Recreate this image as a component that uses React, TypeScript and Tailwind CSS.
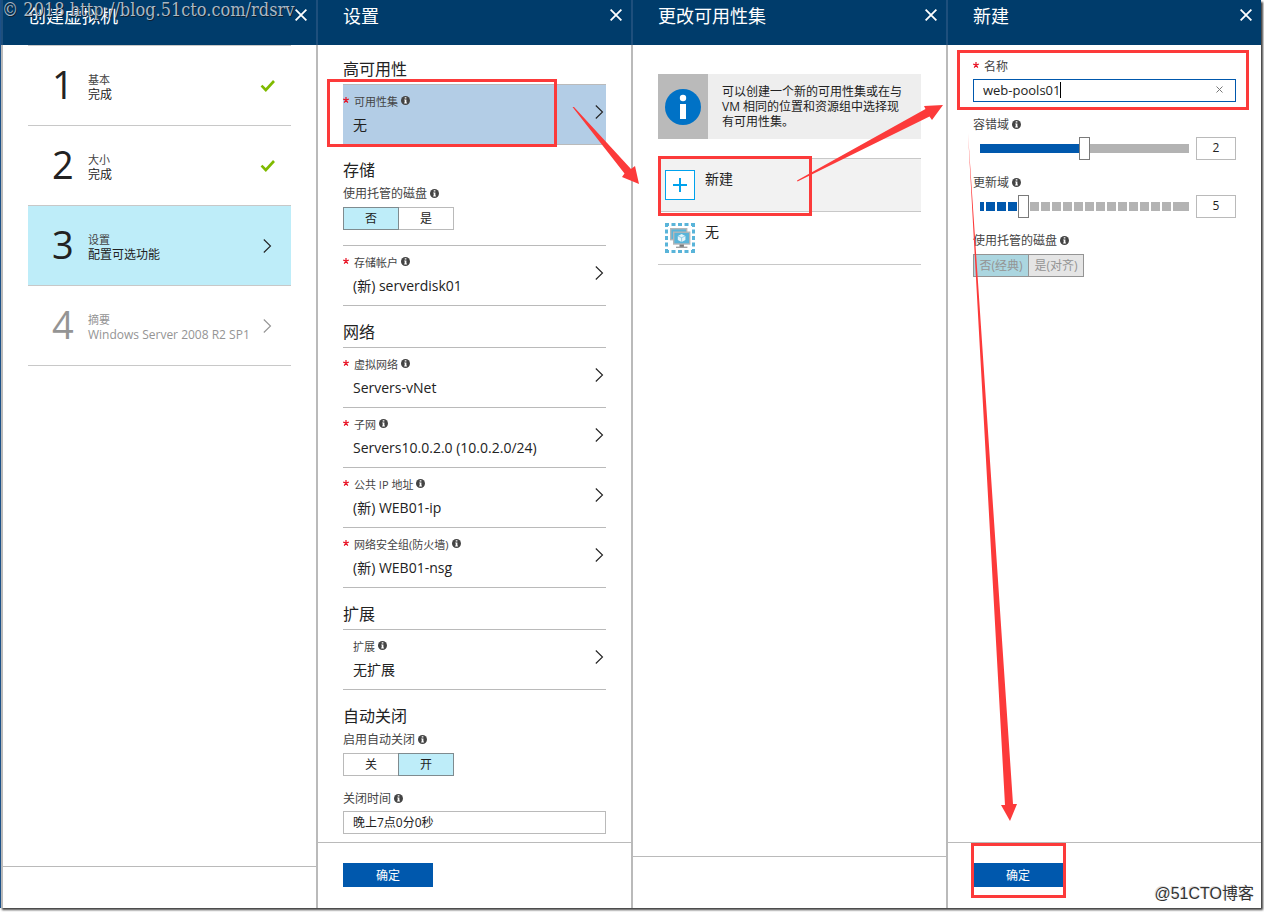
import type { ReactNode } from 'react';
import { clsx } from 'clsx';

export default function App() {
    return (
        <div className="relative flex min-h-screen bg-white pr-[3px] pb-1 font-['Open_Sans','Noto_Sans_CJK_SC',sans-serif] text-[#222]">
            <main className="flex flex-1 border-l border-[#1b5088] bg-white shadow-[2px_2px_2px_rgba(0,0,0,0.75)]">
                <CreateBlade />
                <SettingsBlade />
                <AvailabilitySetBlade />
                <NewSetBlade />
            </main>
            <Arrows />
            <p className="pointer-events-none absolute top-0 left-[2px] font-['DejaVu_Serif_Condensed','DejaVu_Serif',serif] text-lg leading-5 whitespace-nowrap text-[#a9b7c4] [text-shadow:1px_1px_0_#10202e]">
                © 2018 http://blog.51cto.com/rdsrv
            </p>
            <p className="pointer-events-none absolute right-[10px] bottom-2 font-['Liberation_Sans','Noto_Sans_CJK_SC',sans-serif] text-base leading-5 text-[#333] [text-shadow:1px_1px_0_#fff,-1px_-1px_0_#ddd]">
                @51CTO博客
            </p>
        </div>
    );
}

/* ---------- blades ---------- */

function CreateBlade() {
    return (
        <Blade title="创建虚拟机" footer={<div className="h-[42px]" />}>
            <ol className="border-b border-[#c8c8c8]">
                <Step number={1} label="基本" value="完成" icon={<Check />} />
                <Step number={2} label="大小" value="完成" icon={<Check />} />
                <Step number={3} label="设置" value="配置可选功能" icon={<Chevron />} active />
                <Step number={4} label="摘要" value="Windows Server 2008 R2 SP1" icon={<Chevron />} muted />
            </ol>
        </Blade>
    );
}

function SettingsBlade() {
    return (
        <Blade
            title="设置"
            footer={
                <div className="h-[66px] px-[25px] pt-[21px]">
                    <OkButton />
                </div>
            }
        >
            <div className="flex flex-col gap-3.5 pt-3 pb-2">
                <Section title="高可用性">
                    <div className="relative">
                        <Row label="可用性集" value="无" required selected />
                        <Frame className="-top-[5px] -bottom-[2px] -left-4 w-[230px]" />
                    </div>
                </Section>
                <Section title="存储" tight>
                    <FieldLabel>使用托管的磁盘</FieldLabel>
                    <Toggle label="使用托管的磁盘" options={['否', '是']} selected={0} />
                    <div className="mt-[15px]">
                        <Row label="存储帐户" value="(新) serverdisk01" required />
                    </div>
                </Section>
                <Section title="网络">
                    <Row label="虚拟网络" value="Servers-vNet" required />
                    <Row label="子网" value="Servers10.0.2.0 (10.0.2.0/24)" required />
                    <Row label="公共 IP 地址" value="(新) WEB01-ip" required />
                    <Row label="网络安全组(防火墙)" value="(新) WEB01-nsg" required />
                </Section>
                <Section title="扩展">
                    <Row label="扩展" value="无扩展" />
                </Section>
                <Section title="自动关闭" tight>
                    <FieldLabel>启用自动关闭</FieldLabel>
                    <Toggle label="启用自动关闭" options={['关', '开']} selected={1} />
                    <div className="mt-3">
                        <FieldLabel htmlFor="shutdown-time">关闭时间</FieldLabel>
                    </div>
                    <input
                        id="shutdown-time"
                        defaultValue="晚上7点0分0秒"
                        className="mt-[3px] block h-[23px] w-full border border-[#bababa] px-[9px] pb-0.5 text-xs outline-none"
                    />
                </Section>
            </div>
        </Blade>
    );
}

function AvailabilitySetBlade() {
    return (
        <Blade title="更改可用性集" footer={<div className="h-[52px]" />}>
            <div className="mt-[29px] flex bg-[#eee]">
                <div className="flex w-[50px] shrink-0 items-center justify-center bg-[#bababa]">
                    <svg width="36" height="36" viewBox="0 0 36 36" aria-hidden="true">
                        <circle cx="18" cy="18" r="18" fill="#0072c6" />
                        <circle cx="18" cy="9" r="3.2" fill="#fff" />
                        <rect x="15" y="15" width="6" height="15" fill="#fff" />
                    </svg>
                </div>
                <p className="py-[10px] pr-4 pl-[14px] text-xs leading-[15px]">
                    可以创建一个新的可用性集或在与 VM 相同的位置和资源组中选择现有可用性集。
                </p>
            </div>
            <ul className="mt-[19px] border-b border-[#c8c8c8]">
                <li className="relative">
                    <Choice label="新建" icon={<PlusTile />} highlighted />
                    <Frame className="-top-[2px] -bottom-[5px] left-0 w-[154px]" />
                </li>
                <li>
                    <Choice label="无" icon={<AvailabilitySetIcon />} />
                </li>
            </ul>
        </Blade>
    );
}

function NewSetBlade() {
    return (
        <Blade
            title="新建"
            footer={
                <div className="h-[66px] px-[25px] pt-[21px]">
                    <div className="relative w-fit">
                        <OkButton />
                        <Frame className="-top-5 -bottom-[11px] -left-[2px] w-[95px]" />
                    </div>
                </div>
            }
        >
            <div className="flex flex-col gap-3 pt-[11px]">
                <div className="relative">
                    <label htmlFor="set-name" className="flex h-5 items-center pt-0.5 text-xs text-[#444]">
                        <Asterisk />
                        名称
                    </label>
                    <div className="mt-[3px] flex h-[23px] items-center border border-[#0058ad] pr-3 pb-0.5 pl-[9px]">
                        <input
                            id="set-name"
                            defaultValue="web-pools01"
                            className="[field-sizing:content] text-[13px] leading-5 outline-none"
                        />
                        <span className="h-4 w-px bg-black" />
                        <button type="button" aria-label="清除" className="ml-auto">
                            <svg width="7" height="7" viewBox="0 0 7 7" stroke="#777" aria-hidden="true">
                                <path d="M0.5 0.5l6 6M6.5 0.5l-6 6" />
                            </svg>
                        </button>
                    </div>
                    <Frame className="-top-[6px] -right-[13px] -bottom-2 -left-4" />
                </div>
                <SliderField id="fault-domains" label="容错域" value={2} max={3}>
                    <span className="flex-1 bg-[#0058ad]" />
                    <span className="flex-1 bg-[#b3b3b3]" />
                </SliderField>
                <SliderField id="update-domains" label="更新域" value={5} max={22}>
                    <SegmentedTrack filled={4} />
                </SliderField>
                <div>
                    <FieldLabel>使用托管的磁盘</FieldLabel>
                    <Toggle label="使用托管的磁盘" options={['否(经典)', '是(对齐)']} selected={0} disabled />
                </div>
            </div>
        </Blade>
    );
}

/* ---------- building blocks ---------- */

function Blade({ title, footer, children }: { title: string; footer: ReactNode; children: ReactNode }) {
    return (
        <section className="flex min-w-0 flex-1 flex-col">
            <header className="flex h-[45px] items-start justify-between border-l-2 border-[#1e4f7c] bg-[#003c6b] pr-[9px] pl-[25px] text-white">
                <h1 className="text-lg leading-8">{title}</h1>
                <button type="button" aria-label="关闭" className="mt-[9px]">
                    <svg width="12" height="12" viewBox="0 0 12 12" stroke="white" strokeWidth="1.8" aria-hidden="true">
                        <path d="M0.6 0.6l10.8 10.8M11.4 0.6L0.6 11.4" />
                    </svg>
                </button>
            </header>
            <div className="flex flex-1 flex-col border-l-2 border-[#bababa]">
                <div className="flex-1 px-[25px]">{children}</div>
                <footer className="border-t border-[#bababa] [&>div]:-mt-px">{footer}</footer>
            </div>
        </section>
    );
}

interface StepProps {
    number: number;
    label: string;
    value: string;
    icon: ReactNode;
    active?: boolean;
    muted?: boolean;
}

function Step({ number, label, value, icon, active, muted }: StepProps) {
    return (
        <li className="border-t border-[#c8c8c8]">
            <button
                type="button"
                className={clsx(
                    'flex h-[79px] w-full items-center pr-4 pl-6 text-left',
                    active && 'bg-[#beedf9]',
                    muted && 'text-[#949494]',
                )}
            >
                <span className="w-9 shrink-0 pb-1 text-[38px] leading-10">{number}</span>
                <span className="flex-1 pt-0.5 whitespace-nowrap">
                    <span className={clsx('block text-[11px] leading-[15px]', !muted && 'text-[#444]')}>{label}</span>
                    <span className="block text-xs leading-[15px]">{value}</span>
                </span>
                <span className="flex w-[15px] shrink-0 justify-center">{icon}</span>
            </button>
        </li>
    );
}

function Section({ title, tight, children }: { title: string; tight?: boolean; children: ReactNode }) {
    return (
        <section>
            <h2 className={clsx('text-base leading-6', tight ? 'mb-px' : 'mb-[3px]')}>{title}</h2>
            {children}
        </section>
    );
}

interface RowProps {
    label: string;
    value: string;
    required?: boolean;
    selected?: boolean;
}

function Row({ label, value, required, selected }: RowProps) {
    return (
        <button
            type="button"
            className={clsx(
                '-mb-px flex h-[61px] w-full items-center justify-between border-y border-[#bababa] pr-[2px] text-left last:mb-0',
                selected && 'bg-[#b3cde6]',
            )}
        >
            <span className="pb-px">
                <span className="flex items-center text-[11px] leading-4 text-[#444]">
                    {required ? <Asterisk /> : <span className="w-[10px]" />}
                    {label}
                    <InfoDot />
                </span>
                <span className="mt-[5px] block pl-[10px] text-sm leading-5">{value}</span>
            </span>
            <span className="pb-1.5">
                <Chevron />
            </span>
        </button>
    );
}

function FieldLabel({ htmlFor, children }: { htmlFor?: string; children: ReactNode }) {
    return (
        <label htmlFor={htmlFor} className="flex h-5 items-center pt-0.5 text-xs text-[#444]">
            {children}
            <InfoDot />
        </label>
    );
}

interface ToggleProps {
    label: string;
    options: string[];
    selected: number;
    disabled?: boolean;
}

function Toggle({ label, options, selected, disabled }: ToggleProps) {
    return (
        <div role="group" aria-label={label} className="mt-1 flex">
            {options.map((option, i) => (
                <button
                    key={option}
                    type="button"
                    disabled={disabled}
                    aria-pressed={i === selected}
                    className={clsx(
                        'h-[23px] w-14 border text-xs whitespace-nowrap not-first:-ml-px',
                        disabled && 'border-[#949494] text-[#949494]',
                        disabled && (i === selected ? 'bg-[#abd6e0]' : 'bg-[#e5e5e5]'),
                        !disabled && (i === selected ? 'relative border-[#7f8b8f] bg-[#beedf9]' : 'border-[#bababa]'),
                    )}
                >
                    {option}
                </button>
            ))}
        </div>
    );
}

interface SliderFieldProps {
    id: string;
    label: string;
    value: number;
    max: number;
    children: ReactNode;
}

function SliderField({ id, label, value, max, children }: SliderFieldProps) {
    return (
        <div>
            <FieldLabel htmlFor={id}>{label}</FieldLabel>
            <div className="mt-[3px] flex gap-[7px] pl-[7px]">
                <div className="relative flex h-[23px] flex-1 items-center">
                    <div className="flex h-[9px] w-full">{children}</div>
                    <input
                        id={id}
                        type="range"
                        min={1}
                        max={max}
                        defaultValue={value}
                        className="absolute inset-0 w-full appearance-none bg-transparent [&::-webkit-slider-thumb]:h-[23px] [&::-webkit-slider-thumb]:w-[11px] [&::-webkit-slider-thumb]:appearance-none [&::-webkit-slider-thumb]:border [&::-webkit-slider-thumb]:border-[#7a7a7a] [&::-webkit-slider-thumb]:bg-white"
                    />
                </div>
                <input
                    aria-label={label}
                    defaultValue={value}
                    className="h-[23px] w-10 border border-[#bababa] pb-0.5 text-center text-xs outline-none"
                />
            </div>
        </div>
    );
}

function SegmentedTrack({ filled }: { filled: number }) {
    return (
        <span className="flex w-full gap-0.5">
            {Array.from({ length: 19 }, (_, i) => (
                <span
                    key={i}
                    className={clsx(
                        i < filled ? 'bg-[#0058ad]' : 'bg-[#b3b3b3]',
                        i === 0 && 'w-1',
                        i === 18 && 'w-4',
                        i > 0 && i < 18 && 'flex-1',
                    )}
                />
            ))}
        </span>
    );
}

function Choice({ label, icon, highlighted }: { label: string; icon: ReactNode; highlighted?: boolean }) {
    return (
        <button
            type="button"
            className={clsx(
                'flex h-[53px] w-full items-start gap-[10px] border-t border-[#c8c8c8] pl-[7px] text-left',
                highlighted && 'bg-[#f2f2f2]',
            )}
        >
            <span className="mt-[11px]">{icon}</span>
            <span className="mt-[10px] text-sm leading-5">{label}</span>
        </button>
    );
}

function OkButton() {
    return (
        <button type="button" className="block h-6 w-[90px] bg-[#0058ad] pt-0.5 text-xs text-white">
            确定
        </button>
    );
}

/* ---------- icons and marks ---------- */

function Asterisk() {
    return (
        <svg width="6" height="6" viewBox="0 0 6 6" stroke="#e81123" className="mr-[5px] mb-1 shrink-0" aria-hidden="true">
            <path d="M3 0v3M0.2 2.2L3 3l2.8-0.8M1.2 5.7L3 3l1.8 2.7" strokeWidth="1.2" fill="none" />
        </svg>
    );
}

function InfoDot() {
    return (
        <svg width="9" height="9" viewBox="0 0 9 9" className="mb-0.5 ml-[3px] shrink-0" aria-hidden="true">
            <circle cx="4.5" cy="4.5" r="4.5" fill="#444" />
            <path d="M3.7 1.2h1.7v1.4H3.7zM3.2 3.4h2.2v3.2h0.5v1H3.2v-1h0.5V4.3H3.2z" fill="#fff" />
        </svg>
    );
}

function Chevron() {
    return (
        <svg width="9" height="14" viewBox="0 0 9 14" fill="none" stroke="currentColor" className="shrink-0" aria-hidden="true">
            <path d="M0.8 0.5L7.5 7L0.8 13.5" strokeWidth="1.1" />
        </svg>
    );
}

function Check() {
    return (
        <svg width="15" height="12" viewBox="0 0 15 12" fill="none" stroke="#7fba00" className="shrink-0" aria-hidden="true">
            <path d="M1.5 5.6L5.8 10L14 1" strokeWidth="2.6" />
        </svg>
    );
}

function PlusTile() {
    return (
        <svg width="30" height="30" viewBox="0 0 30 30" stroke="#00a2ed" aria-hidden="true">
            <rect x="0.5" y="0.5" width="29" height="29" fill="#fff" />
            <path d="M15 8v14M8 15h14" strokeWidth="2" />
        </svg>
    );
}

function AvailabilitySetIcon() {
    return (
        <svg width="30" height="30" viewBox="0 0 30 30" fill="none" aria-hidden="true">
            <path
                d="M0 1.5H30M0 28.5H30M1.5 0V30M28.5 0V30"
                stroke="#59b4d9"
                strokeWidth="3"
                strokeDasharray="4 2.5"
            />
            <rect x="5.7" y="5.7" width="16" height="11" fill="#59b4d9" stroke="#b4b6b8" strokeWidth="1.4" />
            <rect x="8.7" y="9.2" width="16" height="11.8" fill="#59b4d9" stroke="#b4b6b8" strokeWidth="1.4" />
            <path d="M14.5 21.5h4.4V24H14.5z" fill="#7a7a7a" />
            <path d="M11 23.6h11.4V25H11z" fill="#a0a1a2" />
            <path d="M16.6 11l3.8 1.9v4.2l-3.8 2-3.8-2v-4.2z" fill="#e4f4fa" />
            <path d="M12.8 12.9l3.8 1.8 3.8-1.8M16.6 14.7v4.4" stroke="#59b4d9" strokeWidth="0.6" />
        </svg>
    );
}

function Frame({ className }: { className: string }) {
    return <span className={clsx('pointer-events-none absolute border-3 border-[#fc3a3a]', className)} />;
}

function Arrows() {
    return (
        <svg
            viewBox="0 0 1264 912"
            preserveAspectRatio="none"
            fill="#fc3a3a"
            className="pointer-events-none absolute inset-0 h-full w-full"
            aria-hidden="true"
        >
            <path d="M572.5 107L574 107L631 169L635 166L639 184L622 177L624.5 173.5Z" />
            <path d="M797 180.5L925.5 109L924 106L943 105L932 120L929.5 116.5L797.5 181.5Z" />
            <path d="M968 133L1013 804H1017L1010 821L1001 805H1005Z" />
        </svg>
    );
}
